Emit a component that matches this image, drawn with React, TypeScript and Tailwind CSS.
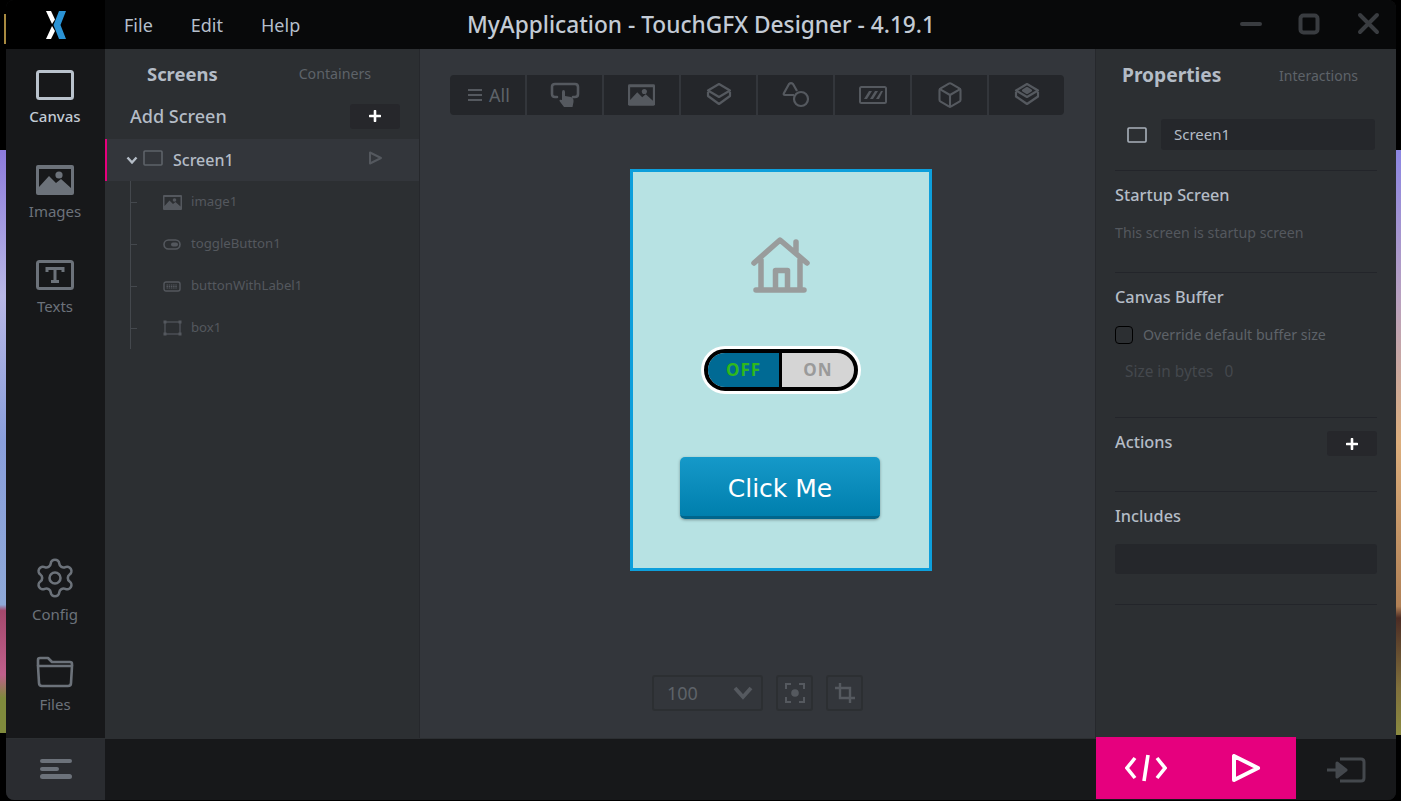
import { Box, Settings } from "lucide-react";

const navGrey = "#6c727a";
const treeGrey = "#54585e";
const toolGrey = "#55595f";

function Plus() {
  return (
    <svg width="12" height="12" viewBox="0 0 12 12">
      <path d="M6 1v10M1 6h10" stroke="#fff" strokeWidth="2.6" strokeLinecap="round" />
    </svg>
  );
}

function PictureIcon({ w, h, color, bg }: { w: number; h: number; color: string; bg: string }) {
  return (
    <svg width={w} height={h} viewBox="0 0 38 30">
      <rect x="0" y="0" width="38" height="30" rx="2" fill={color} />
      <path d="M3 4 H35 V23 L25 14 L20 18 L13 11 L3 22 Z" fill={bg} />
      <circle cx="23" cy="10" r="3.6" fill={color} />
    </svg>
  );
}

function TextBoxIcon() {
  return (
    <svg width="38" height="30" viewBox="0 0 38 30" fill="none">
      <rect x="1.5" y="1.5" width="35" height="27" rx="2" stroke={navGrey} strokeWidth="3" />
      <path d="M11 12V8.5H27V12M19 8.5V21M15 21.5H23" stroke={navGrey} strokeWidth="3" />
    </svg>
  );
}

function NavItem({ label, active, icon }: { label: string; active?: boolean; icon: React.ReactNode }) {
  return (
    <div className="flex h-[95px] flex-col items-center">
      <div className="flex h-[30px] items-center">{icon}</div>
      <span className={`mt-[6px] text-[15px] leading-[20px] ${active ? "font-medium text-[#c3cbd4]" : "text-[#6c727a]"}`}>{label}</span>
    </div>
  );
}

function TreeRow({ label, icon }: { label: string; icon: React.ReactNode }) {
  return (
    <div className="relative flex h-[42px] items-center">
      <div className="absolute left-[25px] top-[21px] h-px w-[7px] bg-[#44484d]" />
      <div className="ml-[57px] flex w-[20px] justify-center">{icon}</div>
      <span className="ml-[9px] text-[13.2px] text-[#54585e]">{label}</span>
    </div>
  );
}

function Cell({ children }: { children: React.ReactNode }) {
  return <div className="flex h-full w-[77px] items-center justify-center border-r-2 border-[#33363b]">{children}</div>;
}

function Toggle() {
  return (
    <div className="mt-[50px] flex h-[48px] w-[160px] rounded-full bg-white p-[3px]">
      <div className="flex h-[42px] w-full overflow-hidden rounded-full border-[4px] border-black bg-[#d5d5d5]">
        <div className="flex w-[74px] items-center justify-center border-r-[3px] border-black bg-[#006a94] text-[17px] font-bold tracking-[1px] text-[#2fb81c]">
          OFF
        </div>
        <div className="flex flex-1 items-center justify-center text-[17px] font-bold tracking-[1px] text-[#9a9a9a]">ON</div>
      </div>
    </div>
  );
}

function Preview() {
  return (
    <div className="ml-[210px] mt-[54px] flex h-[402px] w-[302px] flex-col items-center border-[3px] border-[#0d9fdb] bg-[#b7e2e3]">
      <svg className="mt-[64px] blur-[0.4px]" width="60" height="60" viewBox="0 0 60 60" fill="none">
        <path
          d="M3 27 L29 4 L56 27 M45 15 V6 M10 24 V54 M49 24 V54 M5 54 H53 M24.5 54 V34.5 H36.5 V54"
          stroke="#999c9c"
          strokeWidth="5.5"
          strokeLinecap="round"
          strokeLinejoin="round"
        />
      </svg>
      <Toggle />
      <div className="mr-[2px] mt-[63px] flex h-[62px] w-[200px] items-center justify-center rounded-[5px] border-b-[3px] border-[#00658c] bg-gradient-to-b from-[#1599c9] to-[#007fad] pt-[4px] text-[25px] text-white shadow-[0_1px_3px_rgba(0,0,0,0.35)] [font-family:'DejaVu_Sans',sans-serif]">
        Click Me
      </div>
    </div>
  );
}

function Section({ title, h, children }: { title: string; h: number; children?: React.ReactNode }) {
  return (
    <div className="border-b border-[#23252a] pt-[12px]" style={{ height: h }}>
      <div className="text-[16.3px] font-medium leading-[24px] text-[#b4bcc6]">{title}</div>
      {children}
    </div>
  );
}

export default function App() {
  return (
    <div className="flex h-[801px] w-[1401px] overflow-hidden bg-black [font-family:'Noto_Sans',sans-serif]">
      {/* desktop wallpaper slivers */}
      <div className="flex w-[6px] flex-col">
        <div className="h-[150px] bg-black">
          <div className="ml-[4px] mt-[14px] h-[30px] w-[2px] bg-[#a88a40]" />
        </div>
        <div className="h-[583px] bg-[linear-gradient(180deg,#8d7bdc_0%,#b9b8e6_25%,#8a9fdc_50%,#8fa9d8_78%,#a4486c_79%,#c0608c_90%,#7f8a3c_94%,#7f8a3c_100%)]" />
      </div>

      <div className="flex h-[800px] w-[1390px] flex-col overflow-hidden rounded-lg bg-[#17181a]">
        {/* title bar */}
        <div className="relative flex h-[49px] items-center bg-[#08090a]">
          <div className="flex h-full w-[99px] items-center justify-center bg-black">
            <svg width="24" height="30" viewBox="0 0 24 30">
              <path d="M2 1H7L11 9.5L8 14Z" fill="#fff" />
              <path d="M2 29H7L11 21L8 16Z" fill="#fff" />
              <path d="M15 1H22L16.5 15L22 29H15L9.5 15Z" fill="#2a93d5" />
            </svg>
          </div>
          <div className="ml-[19px] flex gap-[38px] pt-[2px] text-[18px] text-[#b5bfcb]">
            <span>File</span>
            <span>Edit</span>
            <span>Help</span>
          </div>
          <div className="absolute left-[461px] top-[7px] text-[22.7px] font-medium leading-[36px] text-[#c3cbd5]">
            MyApplication - TouchGFX Designer - 4.19.1
          </div>
          <svg className="absolute right-[16px] top-[12px]" width="140" height="24" viewBox="0 0 140 24" fill="none" stroke="#393c40" strokeWidth="4" strokeLinecap="round">
            <path d="M2 12H20" />
            <rect x="60.5" y="3.5" width="17" height="17" rx="3" />
            <path d="M120 3L137 20M137 3L120 20" />
          </svg>
        </div>

        <div className="flex h-[689px]">
          {/* left rail */}
          <div className="flex w-[99px] flex-col bg-[#17181a] pr-[1px] pt-[21px]">
            <NavItem
              label="Canvas"
              active
              icon={
                <svg width="38" height="30" viewBox="0 0 38 30" fill="none">
                  <rect x="1.5" y="1.5" width="35" height="27" rx="2" stroke="#b9c2cc" strokeWidth="3" />
                </svg>
              }
            />
            <NavItem label="Images" icon={<PictureIcon w={38} h={30} color={navGrey} bg="#17181a" />} />
            <NavItem label="Texts" icon={<TextBoxIcon />} />
            <div className="mt-auto flex h-[97px] flex-col items-center">
              <Settings size={44} color={navGrey} strokeWidth={1.4} className="mt-[-3px]" />
              <span className="mt-[4px] text-[15px] leading-[20px] text-[#6c727a]">Config</span>
            </div>
            <div className="flex h-[82px] flex-col items-center">
              <svg width="38" height="32" viewBox="0 0 38 32" fill="none" stroke={navGrey} strokeWidth="2.6" strokeLinejoin="round">
                <path d="M2 10V4Q2 2 4 2H12L16 6H34Q36 6 36 8V10" />
                <path d="M2 10H36L35 27Q35 30 32 30H6Q3 30 3 27Z" />
              </svg>
              <span className="mt-[6px] text-[15px] leading-[20px] text-[#6c727a]">Files</span>
            </div>
          </div>

          {/* screens panel */}
          <div className="flex w-[315px] flex-col border-r border-[#26282c] bg-[#2c2f32]">
            <div className="flex h-[50px] items-center">
              <span className="ml-[42px] text-[18.4px] font-bold text-[#b4bcc6]">Screens</span>
              <span className="ml-[81px] text-[14.2px] text-[#5e6369]">Containers</span>
            </div>
            <div className="flex h-[40px] items-center pb-[6px]">
              <span className="ml-[25px] text-[18px] font-medium text-[#b4bcc6]">Add Screen</span>
              <div className="ml-auto mr-[19px] flex h-[25px] w-[50px] items-center justify-center rounded-[3px] bg-[#26272b]">
                <Plus />
              </div>
            </div>
            <div className="flex h-[42px] items-center border-l-2 border-[#e6007e] bg-[#33363b]">
              <svg className="ml-[19px]" width="12" height="9" viewBox="0 0 12 9" fill="none">
                <path d="M1.5 1.5L6 6.5L10.5 1.5" stroke="#b4bcc6" strokeWidth="2.4" />
              </svg>
              <svg className="mb-[4px] ml-[5px]" width="20" height="16" viewBox="0 0 20 16" fill="none">
                <rect x="1" y="1" width="18" height="14" rx="1" stroke="#5e6369" strokeWidth="1.6" />
              </svg>
              <span className="ml-[10px] text-[16px] font-medium text-[#b4bcc6]">Screen1</span>
              <svg className="mb-[4px] ml-[134px]" width="15" height="14" viewBox="0 0 15 14" fill="none">
                <path d="M2 1.5V12.5L13 7Z" stroke="#54585e" strokeWidth="2" strokeLinejoin="round" />
              </svg>
            </div>
            <div className="relative">
              <div className="absolute left-[25px] top-0 h-[168px] w-px bg-[#44484d]" />
              <TreeRow label="image1" icon={<PictureIcon w={19} h={15} color={treeGrey} bg="#2c2f32" />} />
              <TreeRow
                label="toggleButton1"
                icon={
                  <svg width="18" height="11" viewBox="0 0 18 11" fill="none">
                    <rect x="1" y="1" width="16" height="9" rx="4.5" stroke={treeGrey} strokeWidth="1.6" />
                    <rect x="8" y="3.5" width="7" height="4" rx="2" fill={treeGrey} />
                  </svg>
                }
              />
              <TreeRow
                label="buttonWithLabel1"
                icon={
                  <svg width="18" height="11" viewBox="0 0 18 11" fill="none">
                    <rect x="1" y="1" width="16" height="9" rx="2" stroke={treeGrey} strokeWidth="1.4" />
                    <path d="M3.5 4H14.5M3.5 5.5H14.5M3.5 7H14.5" stroke={treeGrey} strokeWidth="1" strokeDasharray="1.5 0.7" />
                  </svg>
                }
              />
              <TreeRow
                label="box1"
                icon={
                  <svg width="19" height="16" viewBox="0 0 19 16" fill="none" stroke={treeGrey}>
                    <rect x="2" y="2" width="15" height="12" strokeWidth="1.2" />
                    <g fill={treeGrey} strokeWidth="0">
                      <rect x="0.5" y="0.5" width="3" height="3" />
                      <rect x="15.5" y="0.5" width="3" height="3" />
                      <rect x="0.5" y="12.5" width="3" height="3" />
                      <rect x="15.5" y="12.5" width="3" height="3" />
                    </g>
                  </svg>
                }
              />
            </div>
          </div>

          {/* canvas area */}
          <div className="flex w-[676px] flex-col border-r border-[#26282c] bg-[#33363b]">
            <div className="ml-[30px] mt-[26px] flex h-[40px] w-[614px] overflow-hidden rounded-[4px] bg-[#24262a]">
              <div className="flex h-full w-[77px] items-center justify-center gap-[7px] border-r-2 border-[#33363b] pl-[3px] text-[18px] text-[#5e6369]">
                <svg width="14" height="14" viewBox="0 0 14 14">
                  <path d="M0 2H14M0 7H14M0 12H14" stroke={toolGrey} strokeWidth="2" />
                </svg>
                All
              </div>
              <Cell>
                <svg width="30" height="26" viewBox="0 0 30 26" fill="none">
                  <path d="M7 15H5Q2 15 2 12V5Q2 2 5 2H25Q28 2 28 5V12Q28 15 25 15H23" stroke={toolGrey} strokeWidth="2.6" strokeLinecap="round" />
                  <path d="M12 10Q12 8 13.5 8Q15 8 15 10V14L21 15Q24 16 23.5 20L22.5 25H14L9.5 19Q9 17 12 18Z" fill={toolGrey} />
                </svg>
              </Cell>
              <Cell>
                <PictureIcon w={27} h={26} color={toolGrey} bg="#24262a" />
              </Cell>
              <Cell>
                <svg width="26" height="26" viewBox="0 0 26 26" fill="none" stroke={toolGrey} strokeWidth="2.2" strokeLinejoin="round">
                  <path d="M13 2L24 8.5L13 15L2 8.5Z" />
                  <path d="M2 10V14L13 22L24 14V10" />
                </svg>
              </Cell>
              <Cell>
                <svg width="28" height="28" viewBox="0 0 28 28" fill="none" stroke={toolGrey} strokeWidth="2.2" strokeLinejoin="round">
                  <path d="M12 14H3Q1 14 2 12L7 3Q9 1 11 3L15 10" />
                  <circle cx="19" cy="18" r="7" />
                </svg>
              </Cell>
              <Cell>
                <svg width="28" height="18" viewBox="0 0 28 18" fill="none" stroke={toolGrey}>
                  <rect x="1" y="1" width="26" height="16" rx="1.5" strokeWidth="2" />
                  <path d="M5 13L10 5H13L8 13ZM11 13L16 5H19L14 13ZM17 13L22 5H24L20 13Z" fill={toolGrey} strokeWidth="0" />
                </svg>
              </Cell>
              <Cell>
                <Box size={28} color={toolGrey} strokeWidth={1.8} />
              </Cell>
              <div className="flex flex-1 items-center justify-center">
                <svg width="26" height="26" viewBox="0 0 26 26" fill="none" stroke={toolGrey} strokeWidth="2.2" strokeLinejoin="round">
                  <path d="M13 2L24 8.5L13 15L2 8.5Z" />
                  <path d="M9 8.5L13 6L17 8.5L13 11Z" fill={toolGrey} />
                  <path d="M2 10V14.5L13 22L24 14.5V10" />
                </svg>
              </div>
            </div>

            <Preview />

            <div className="ml-[232px] mt-[104px] flex">
              <div className="flex h-[36px] w-[111px] items-center justify-between rounded-[3px] border-2 border-[#2c2f32] pl-[13px] pr-[8px] text-[18px] text-[#5e6369]">
                100
                <svg width="20" height="14" viewBox="0 0 20 14" fill="none">
                  <path d="M2 2L10 11L18 2" stroke={toolGrey} strokeWidth="3.8" />
                </svg>
              </div>
              <div className="ml-[13px] flex h-[36px] w-[37px] items-center justify-center rounded-[3px] border-2 border-[#2c2f32]">
                <svg width="20" height="20" viewBox="0 0 20 20" fill="none" stroke={toolGrey} strokeWidth="2">
                  <path d="M1 6V1H6M14 1H19V6M19 14V19H14M6 19H1V14" />
                  <circle cx="10" cy="10" r="3.8" fill={toolGrey} strokeWidth="0" />
                </svg>
              </div>
              <div className="ml-[13px] flex h-[36px] w-[37px] items-center justify-center rounded-[3px] border-2 border-[#2c2f32]">
                <svg width="20" height="20" viewBox="0 0 20 20" fill="none" stroke={toolGrey} strokeWidth="2.4">
                  <path d="M5 0V15H20M0 5H15V20" />
                </svg>
              </div>
            </div>
          </div>

          {/* properties */}
          <div className="flex w-[300px] flex-col bg-[#2c2f32] pl-[19px] pr-[19px]">
            <div className="flex h-[50px] items-center pt-[2px]">
              <span className="ml-[7px] text-[19.2px] font-bold text-[#b4bcc6]">Properties</span>
              <span className="ml-auto mr-[19px] text-[14px] text-[#5e6369]">Interactions</span>
            </div>
            <div className="flex h-[72px] items-start border-b border-[#23252a] pt-[20px]">
              <svg className="ml-[12px] mt-[8px]" width="20" height="16" viewBox="0 0 20 16" fill="none">
                <rect x="1" y="1" width="18" height="14" rx="1" stroke="#a9b1bb" strokeWidth="1.6" />
              </svg>
              <div className="ml-[14px] flex h-[31px] w-[214px] items-center rounded-[3px] bg-[#25272b] pl-[13px] text-[15px] text-[#b4bcc6]">Screen1</div>
            </div>
            <Section title="Startup Screen" h={102}>
              <div className="mt-[16px] text-[14.2px] leading-[20px] text-[#54585e]">This screen is startup screen</div>
            </Section>
            <Section title="Canvas Buffer" h={145}>
              <div className="mt-[16px] flex h-[20px] items-center text-[14.2px] text-[#5e6369]">
                <div className="h-[18px] w-[18px] rounded-[4px] border border-black" />
                <span className="ml-[10px]">Override default buffer size</span>
              </div>
              <div className="ml-[10px] mt-[17px] flex text-[15.4px] leading-[20px] text-[#44484d]">
                <span>Size in bytes</span>
                <span className="ml-[11px]">0</span>
              </div>
            </Section>
            <div className="flex h-[74px] items-start justify-between border-b border-[#23252a] pt-[12px]">
              <span className="text-[16.3px] font-medium leading-[24px] text-[#b4bcc6]">Actions</span>
              <div className="mt-[1px] flex h-[25px] w-[50px] items-center justify-center rounded-[3px] bg-[#26272b]">
                <Plus />
              </div>
            </div>
            <Section title="Includes" h={113}>
              <div className="mt-[16px] h-[30px] w-full rounded-[3px] bg-[#25272b]" />
            </Section>
          </div>
        </div>

        {/* footer */}
        <div className="flex h-[62px] border-t border-[#2c2f32]">
          <div className="flex w-[99px] items-center justify-center bg-[#2a2c30]">
            <svg width="32" height="22" viewBox="0 0 32 22">
              <rect x="0" y="0" width="32" height="4" rx="2" fill={navGrey} />
              <rect x="0" y="8" width="19" height="4" rx="2" fill={navGrey} />
              <rect x="0" y="15" width="32" height="5" rx="2.5" fill={navGrey} />
            </svg>
          </div>
          <div className="flex-1 bg-[#17181a]" />
          <div className="mt-[-2px] flex h-[62px] w-[200px] bg-[#e6007e]">
            <div className="flex w-[100px] items-center justify-center">
              <svg width="42" height="28" viewBox="0 0 42 28" fill="none" stroke="#fff" strokeWidth="3.6">
                <path d="M10 4L2 14L10 24" />
                <path d="M32 4L40 14L32 24" />
                <path d="M23 1L19 27" />
              </svg>
            </div>
            <div className="flex w-[100px] items-center justify-center">
              <svg width="30" height="28" viewBox="0 0 30 28" fill="none" stroke="#fff" strokeWidth="4" strokeLinejoin="round">
                <path d="M3 2V26L27 14Z" />
              </svg>
            </div>
          </div>
          <div className="flex w-[100px] items-center justify-center bg-[#17181a]">
            <svg width="40" height="26" viewBox="0 0 40 26" fill="none">
              <path d="M14 2H35Q38 2 38 5V21Q38 24 35 24H14" stroke="#44484d" strokeWidth="3" />
              <path d="M1 13H16M11 6L20 13L11 20Z" stroke="#44484d" strokeWidth="3" fill="#44484d" strokeLinejoin="round" />
            </svg>
          </div>
        </div>
      </div>

      <div className="flex w-[5px] flex-col">
        <div className="h-[150px] bg-black" />
        <div className="h-[585px] bg-[linear-gradient(180deg,#8c86e2_0%,#b8a0c0_25%,#dcae7c_50%,#b08055_78%,#4c2c24_80%,#80703c_92%,#8a8a40_100%)]" />
      </div>
    </div>
  );
}
